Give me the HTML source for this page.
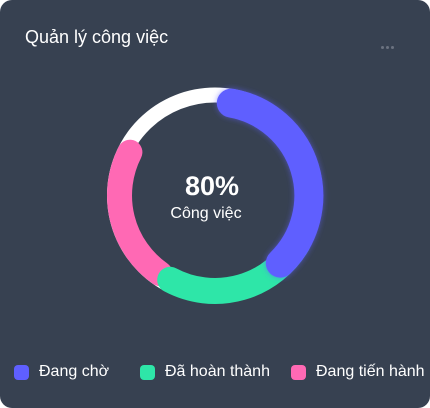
<!DOCTYPE html>
<html><head><meta charset="utf-8"><style>
html,body{margin:0;padding:0;background:#fff;}
.card{position:relative;width:430px;height:408px;background:#374151;border-radius:12px;overflow:hidden;font-family:"Liberation Sans",sans-serif;color:#fff;}
.title{position:absolute;left:25px;top:27px;font-size:18px;}
.dots{position:absolute;left:381px;top:36px;}
.dots i{display:inline-block;width:3px;height:3px;border-radius:50%;background:#6b7280;margin-right:2px;}
.leg{position:absolute;top:363px;font-size:16px;display:flex;align-items:center;white-space:nowrap;}
.leg b{display:inline-block;width:15px;height:15px;border-radius:4px;margin-right:10px;}
svg{position:absolute;left:0;top:0;}
</style></head><body><div class="card">
<div class="title">Quản lý công việc</div>
<div class="dots"><i></i><i></i><i></i></div>
<svg width="430" height="408">
<defs><filter id="g" x="-30%" y="-30%" width="160%" height="160%"><feDropShadow dx="0" dy="0" stdDeviation="3" flood-color="#5f5fff" flood-opacity="0.6"/></filter></defs>
<circle cx="215" cy="195.5" r="100.5" fill="none" stroke="#fff" stroke-width="15"/>
<path d="M160.2 273.7 A95.5 95.5 0 0 1 129.9 152.2" fill="none" stroke="#ff69b4" stroke-width="25" stroke-linecap="round"/>
<path d="M297.7 243.3 A95.5 95.5 0 0 1 170.2 279.8" fill="none" stroke="#2ee6a8" stroke-width="26" stroke-linecap="round"/>
<path d="M231.3 103.1 A94 94 0 0 1 280.3 263.1" fill="none" stroke="#5f5fff" stroke-width="29" stroke-linecap="round" filter="url(#g)"/>
<text x="212" y="195" text-anchor="middle" font-family="Liberation Sans" font-size="27" font-weight="bold" fill="#fff">80%</text>
<text x="206" y="218" text-anchor="middle" font-family="Liberation Sans" font-size="16" fill="#fff">Công việc</text>
</svg>
<div class="leg" style="left:14px"><b style="background:#5f5fff"></b>Đang chờ</div>
<div class="leg" style="left:140px"><b style="background:#2ee6a8"></b>Đã hoàn thành</div>
<div class="leg" style="left:291px"><b style="background:#ff69b4"></b>Đang tiến hành</div>
</div></body></html>
